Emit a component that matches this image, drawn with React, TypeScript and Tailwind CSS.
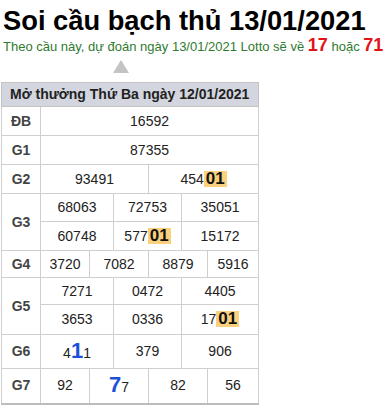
const HL = ({ children }: { children: React.ReactNode }) => (
  <b className="bg-[#fbd07c] px-[2px] text-[17px] font-bold text-[#111] leading-[16px] inline-block">{children}</b>
);

const Big = ({ children }: { children: React.ReactNode }) => (
  <b className="text-[22px] font-bold text-[#1d4fd8] leading-none">{children}</b>
);

const td = 'border border-[#cfcfcf] text-center text-[14px] text-[#222] p-0';
const lbl = 'border border-[#cfcfcf] text-center text-[14px] font-bold text-[#444] p-0';

export default function App() {
  return (
    <main className="w-[385px] h-[412px] bg-white overflow-hidden font-['Liberation_Sans',Arial,sans-serif]">
      <h1 className="pl-[3px] pt-[5px] text-[27.3px] font-bold leading-[32px] text-black">Soi cầu bạch thủ 13/01/2021</h1>
      <p className="pl-[3px] text-[13px] leading-[16px] text-[#2f7a2f]">
        Theo cầu này, dự đoán ngày 13/01/2021 Lotto sẽ về{' '}
        <b className="text-[18px] text-[#e0121b]">17</b> hoặc <b className="text-[18px] text-[#e0121b]">71</b>
      </p>
      <div className="ml-[113px] mt-[5px] w-0 h-0 border-l-[8px] border-r-[8px] border-b-[13px] border-l-transparent border-r-transparent border-b-[#c4c4c4]" />
      <table className="ml-px mt-[9px] w-[257px] table-fixed border-collapse border-b-2 border-b-[#bdbdbd]">
        <colgroup>
          <col className="w-[39px]" />
          <col className="w-[49px]" />
          <col className="w-[24px]" />
          <col className="w-[35px]" />
          <col className="w-[33px]" />
          <col className="w-[26px]" />
          <col className="w-[51px]" />
        </colgroup>
        <tbody>
          <tr className="h-[24px] bg-[#d3d6df]">
            <th colSpan={7} className="border border-[#c4c4c4] text-left pl-[8px] text-[14px] font-bold text-[#222]">
              Mở thưởng Thứ Ba ngày 12/01/2021
            </th>
          </tr>
          <tr className="h-[29px]">
            <td className={lbl}>ĐB</td>
            <td colSpan={6} className={td}>16592</td>
          </tr>
          <tr className="h-[29px]">
            <td className={lbl}>G1</td>
            <td colSpan={6} className={td}>87355</td>
          </tr>
          <tr className="h-[29px]">
            <td className={lbl}>G2</td>
            <td colSpan={3} className={td}>93491</td>
            <td colSpan={3} className={td}>454<HL>01</HL></td>
          </tr>
          <tr className="h-[28px]">
            <td rowSpan={2} className={lbl}>G3</td>
            <td colSpan={2} className={td}>68063</td>
            <td colSpan={2} className={td}>72753</td>
            <td colSpan={2} className={td}>35051</td>
          </tr>
          <tr className="h-[29px]">
            <td colSpan={2} className={td}>60748</td>
            <td colSpan={2} className={td}>577<HL>01</HL></td>
            <td colSpan={2} className={td}>15172</td>
          </tr>
          <tr className="h-[27px]">
            <td className={lbl}>G4</td>
            <td className={td}>3720</td>
            <td colSpan={2} className={td}>7082</td>
            <td colSpan={2} className={td}>8879</td>
            <td className={td}>5916</td>
          </tr>
          <tr className="h-[27px]">
            <td rowSpan={2} className={lbl}>G5</td>
            <td colSpan={2} className={td}>7271</td>
            <td colSpan={2} className={td}>0472</td>
            <td colSpan={2} className={td}>4405</td>
          </tr>
          <tr className="h-[30px]">
            <td colSpan={2} className={td}>3653</td>
            <td colSpan={2} className={td}>0336</td>
            <td colSpan={2} className={td}>17<HL>01</HL></td>
          </tr>
          <tr className="h-[34px]">
            <td className={lbl}>G6</td>
            <td colSpan={2} className={td}>4<Big>1</Big>1</td>
            <td colSpan={2} className={td}>379</td>
            <td colSpan={2} className={td}>906</td>
          </tr>
          <tr className="h-[35px]">
            <td className={lbl}>G7</td>
            <td className={td}>92</td>
            <td colSpan={2} className={td}><Big>7</Big>7</td>
            <td colSpan={2} className={td}>82</td>
            <td className={td}>56</td>
          </tr>
        </tbody>
      </table>
    </main>
  );
}
